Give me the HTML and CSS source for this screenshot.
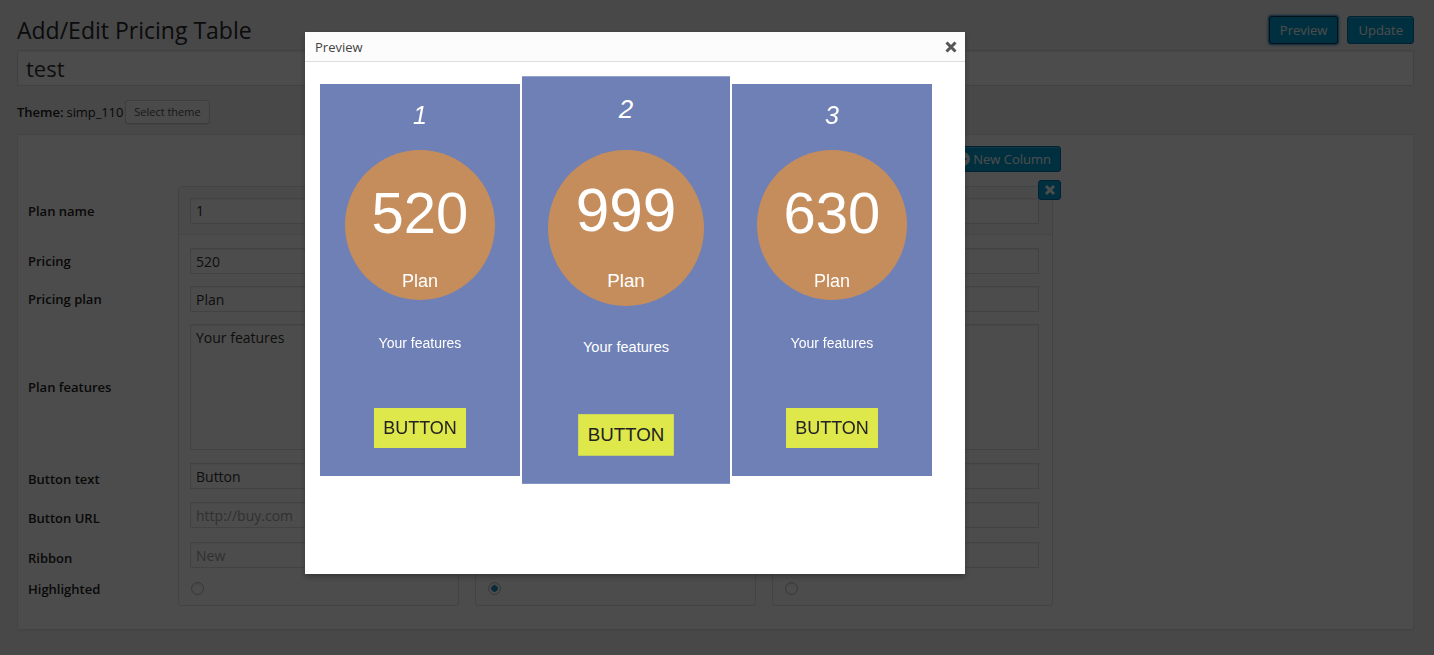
FILE: index.html
```html
<!DOCTYPE html>
<html lang="en">
<head>
<meta charset="utf-8">
<title>Add/Edit Pricing Table</title>
<link rel="stylesheet" href="styles.css">
</head>
<body>
<div class="wrap">
  <div class="page-head">
    <h1 class="page-title">Add/Edit Pricing Table</h1>
    <div class="head-actions">
      <button class="btn btn-primary is-focus">Preview</button>
      <button class="btn btn-primary">Update</button>
    </div>
  </div>
  <input class="title-input" type="text" value="test">
  <div class="theme-row"><span class="theme-label">Theme:</span><span class="theme-name">simp_110</span><button class="btn btn-small">Select theme</button></div>

  <div class="panel">
    <div class="toolbar">
      <button class="btn btn-primary btn-icon">
        <svg class="plus-icon" width="14" height="14" viewBox="0 0 14 14"><circle cx="7" cy="7" r="7" fill="#fff"/><path d="M7 3.5v7M3.5 7h7" stroke="#00a0d2" stroke-width="2"/></svg>
        New Column
      </button>
    </div>
    <div class="editor">
      <div class="labels">
        <div class="row r-head">Plan name</div>
        <div class="r-gap"></div>
        <div class="row r-price">Pricing</div>
        <div class="row r-plan">Pricing plan</div>
        <div class="row r-feat">Plan features</div>
        <div class="row r-btn lbl-low">Button text</div>
        <div class="row r-url lbl-low">Button URL</div>
        <div class="row r-rib lbl-low">Ribbon</div>
        <div class="row r-hl lbl-hl">Highlighted</div>
      </div>

      <div class="col">
        <div class="row r-head col-head"><input class="field" type="text" value="1"></div>
        <div class="r-gap"></div>
        <div class="row r-price"><input class="field" type="text" value="520"></div>
        <div class="row r-plan"><input class="field" type="text" value="Plan"></div>
        <div class="row r-feat"><textarea class="field area">Your features</textarea></div>
        <div class="row r-btn"><input class="field" type="text" value="Button"></div>
        <div class="row r-url"><input class="field" type="text" placeholder="http://buy.com"></div>
        <div class="row r-rib"><input class="field" type="text" placeholder="New"></div>
        <div class="row r-hl"><input class="radio" type="radio" name="hl"></div>
      </div>

      <div class="col">
        <div class="row r-head col-head"><input class="field" type="text" value="2"></div>
        <div class="r-gap"></div>
        <div class="row r-price"><input class="field" type="text" value="999"></div>
        <div class="row r-plan"><input class="field" type="text" value="Plan"></div>
        <div class="row r-feat"><textarea class="field area">Your features</textarea></div>
        <div class="row r-btn"><input class="field" type="text" value="Button"></div>
        <div class="row r-url"><input class="field" type="text" placeholder="http://buy.com"></div>
        <div class="row r-rib"><input class="field" type="text" placeholder="New"></div>
        <div class="row r-hl"><input class="radio" type="radio" name="hl" checked></div>
      </div>

      <div class="col">
        <button class="col-del" aria-label="Delete column"><svg width="12" height="12" viewBox="0 0 12 12"><path d="M2 2l8 8M10 2l-8 8" stroke="#fff" stroke-width="3"/></svg></button>
        <div class="row r-head col-head"><input class="field" type="text" value="3"></div>
        <div class="r-gap"></div>
        <div class="row r-price"><input class="field" type="text" value="630"></div>
        <div class="row r-plan"><input class="field" type="text" value="Plan"></div>
        <div class="row r-feat"><textarea class="field area">Your features</textarea></div>
        <div class="row r-btn"><input class="field" type="text" value="Button"></div>
        <div class="row r-url"><input class="field" type="text" placeholder="http://buy.com"></div>
        <div class="row r-rib"><input class="field" type="text" placeholder="New"></div>
        <div class="row r-hl"><input class="radio" type="radio" name="hl"></div>
      </div>
    </div>
  </div>
</div>

<div class="overlay"></div>

<div class="modal">
  <div class="modal-head">
    <span class="modal-title">Preview</span>
    <button class="modal-close" aria-label="Close"><svg width="12" height="12" viewBox="0 0 12 12"><path d="M1.5 1.5l9 9M10.5 1.5l-9 9" stroke="#555" stroke-width="3"/></svg></button>
  </div>
  <div class="modal-body">
    <div class="pt">
      <div class="pt-col">
        <div class="pt-name">1</div>
        <div class="pt-circle"><div class="pt-price">520</div><div class="pt-plan">Plan</div></div>
        <div class="pt-feat">Your features</div>
        <div class="pt-btn">BUTTON</div>
      </div>
      <div class="pt-col featured">
        <div class="pt-name">2</div>
        <div class="pt-circle"><div class="pt-price">999</div><div class="pt-plan">Plan</div></div>
        <div class="pt-feat">Your features</div>
        <div class="pt-btn">BUTTON</div>
      </div>
      <div class="pt-col">
        <div class="pt-name">3</div>
        <div class="pt-circle"><div class="pt-price">630</div><div class="pt-plan">Plan</div></div>
        <div class="pt-feat">Your features</div>
        <div class="pt-btn">BUTTON</div>
      </div>
    </div>
  </div>
</div>
</body>
</html>
```

FILE: styles.css
```css
* { box-sizing: border-box; }

html, body {
  margin: 0;
  height: 100%;
}

body {
  background: #f1f1f1;
  color: #444;
  font-family: "Open Sans", "Liberation Sans", sans-serif;
  font-size: 13px;
  overflow: hidden;
}

.wrap {
  padding: 0 20px 0 17px;
}

/* ---------- header ---------- */
.page-head {
  display: flex;
  justify-content: space-between;
  align-items: flex-start;
  padding-top: 16px;
}

.page-title {
  margin: 0;
  font-size: 23px;
  line-height: 29px;
  font-weight: 400;
  color: #23282d;
}

.head-actions {
  display: flex;
  gap: 9px;
}

.btn {
  font-family: "Open Sans", "Liberation Sans", sans-serif;
  cursor: pointer;
  border-radius: 3px;
}

.btn-primary {
  height: 28px;
  padding: 0 10px;
  font-size: 13px;
  line-height: 26px;
  color: #fff;
  background: #00a0d2;
  border: 1px solid #0073aa;
  box-shadow: inset 0 1px 0 rgba(120, 200, 230, 0.5);
}

.btn-primary.is-focus {
  border-color: #003a56;
  box-shadow: 0 0 0 1px #5b9dd9, 0 0 3px 1px rgba(30, 140, 190, 0.8);
}

.btn-small {
  height: 24px;
  padding: 0 8px;
  font-size: 11px;
  line-height: 22px;
  color: #555;
  background: #f7f7f7;
  border: 1px solid #ccc;
  box-shadow: inset 0 1px 0 #fff, 0 1px 0 rgba(0, 0, 0, 0.08);
}

.title-input {
  display: block;
  width: 100%;
  height: 36px;
  margin: 5px 0 0;
  padding: 0 8px;
  font-family: "Open Sans", "Liberation Sans", sans-serif;
  font-size: 22px;
  color: #333;
  background: #fff;
  border: 1px solid #ddd;
  box-shadow: inset 0 1px 2px rgba(0, 0, 0, 0.07);
  outline: none;
}

.theme-row {
  display: flex;
  align-items: center;
  height: 24px;
  margin-top: 14px;
  color: #222;
}

.theme-label {
  font-weight: 600;
  margin-right: 3px;
}

.theme-name {
  margin-right: 2px;
  letter-spacing: -0.1px;
}

/* ---------- editor panel ---------- */
.panel {
  margin-top: 10px;
  padding: 11px 10px 23px;
  background: #fff;
  border: 1px solid #e5e5e5;
  box-shadow: 0 1px 1px rgba(0, 0, 0, 0.04);
}

.toolbar {
  display: flex;
  justify-content: flex-end;
  width: 1033px;
  height: 26px;
  margin-bottom: 14px;
}

.btn-icon {
  display: flex;
  align-items: center;
  gap: 3px;
  height: 26px;
  padding: 0 9px 0 3px;
  line-height: 24px;
}

.plus-icon {
  flex: none;
}

.editor {
  display: flex;
  gap: 16px;
  align-items: flex-start;
}

.labels {
  width: 134px;
  padding-top: 1px;
  font-weight: 600;
  color: #222;
}

.row {
  display: flex;
  align-items: center;
}

.lbl-low {
  padding-top: 5px;
}

.lbl-hl {
  padding-top: 2px;
}

.r-head  { height: 48px; }
.r-gap   { height: 7px; }
.r-price { height: 38px; }
.r-plan  { height: 38px; }
.r-feat  { height: 138px; }
.r-btn   { height: 40px; }
.r-url   { height: 38px; }
.r-rib   { height: 42px; }
.r-hl    { height: 24px; }

.col {
  position: relative;
  width: 281px;
  padding-bottom: 5px;
  background: #fff;
  border: 1px solid #e1e1e1;
  border-radius: 3px;
}

.col .row {
  padding: 0 13px 0 11px;
}

.col-head {
  background: #f7f7f7;
  border-bottom: 1px solid #ececec;
  border-radius: 3px 3px 0 0;
}

.field {
  display: block;
  width: 100%;
  height: 26px;
  padding: 0 5px;
  font-family: "Open Sans", "Liberation Sans", sans-serif;
  font-size: 14px;
  color: #333;
  background: #fff;
  border: 1px solid #ddd;
  box-shadow: inset 0 1px 2px rgba(0, 0, 0, 0.07);
  outline: none;
}

.field::placeholder {
  color: #a3a3a3;
}

.area {
  height: 126px;
  padding: 3px 5px;
  resize: none;
  line-height: 20px;
}

.radio {
  appearance: none;
  -webkit-appearance: none;
  width: 13px;
  height: 13px;
  margin: 0 0 0 1px;
  border: 1px solid #b4b9be;
  border-radius: 50%;
  background: #fff;
  box-shadow: inset 0 1px 2px rgba(0, 0, 0, 0.1);
}

.radio:checked {
  background: radial-gradient(circle, #1e8cbe 0 3px, #fff 3.5px);
}

.col-del {
  position: absolute;
  top: -7px;
  right: -9px;
  width: 23px;
  height: 20px;
  padding: 0;
  display: flex;
  align-items: center;
  justify-content: center;
  background: #00a0d2;
  border: 1px solid #0073aa;
  border-radius: 3px;
  cursor: pointer;
}

/* ---------- modal ---------- */
.overlay {
  position: fixed;
  inset: 0;
  background: rgba(0, 0, 0, 0.7);
  z-index: 10;
}

.modal {
  position: fixed;
  left: 305px;
  top: 32px;
  width: 660px;
  height: 542px;
  background: #fff;
  box-shadow: 0 3px 6px rgba(0, 0, 0, 0.3);
  z-index: 20;
}

.modal-head {
  display: flex;
  align-items: center;
  justify-content: space-between;
  height: 30px;
  padding: 0 8px 0 10px;
  background: #fcfcfc;
  border-bottom: 1px solid #ddd;
}

.modal-title {
  font-size: 13px;
  color: #444;
}

.modal-close {
  display: flex;
  padding: 0;
  background: none;
  border: 0;
  cursor: pointer;
}

.modal-body {
  padding: 22px 15px;
}

/* ---------- pricing table preview ---------- */
.pt {
  display: flex;
  gap: 6px;
  font-family: "Liberation Sans", Arial, sans-serif;
  color: #fff;
}

.pt-col {
  display: flex;
  flex-direction: column;
  align-items: center;
  width: 200px;
  height: 392px;
  padding-top: 16px;
  background: #6e80b5;
}

.pt-col.featured {
  transform: scale(1.04);
  position: relative;
  z-index: 1;
}

.pt-name {
  font-size: 25px;
  line-height: 30px;
  font-style: italic;
}

.pt-circle {
  display: flex;
  flex-direction: column;
  align-items: center;
  width: 150px;
  height: 150px;
  margin-top: 20px;
  padding-top: 34px;
  border-radius: 50%;
  background: #c68d5c;
}

.featured .pt-circle {
  margin-top: 25px;
  padding-top: 29px;
}

.pt-price {
  font-size: 58px;
  line-height: 58px;
}

.pt-plan {
  margin-top: 29px;
  font-size: 18px;
  line-height: 20px;
}

.pt-feat {
  margin-top: 35px;
  font-size: 14px;
  line-height: 16px;
}

.featured .pt-feat {
  margin-top: 31px;
}

.pt-btn {
  width: 92px;
  height: 40px;
  margin-top: 57px;
  font-size: 18px;
  line-height: 40px;
  text-align: center;
  color: #222;
  background: #dfe84a;
}
```
